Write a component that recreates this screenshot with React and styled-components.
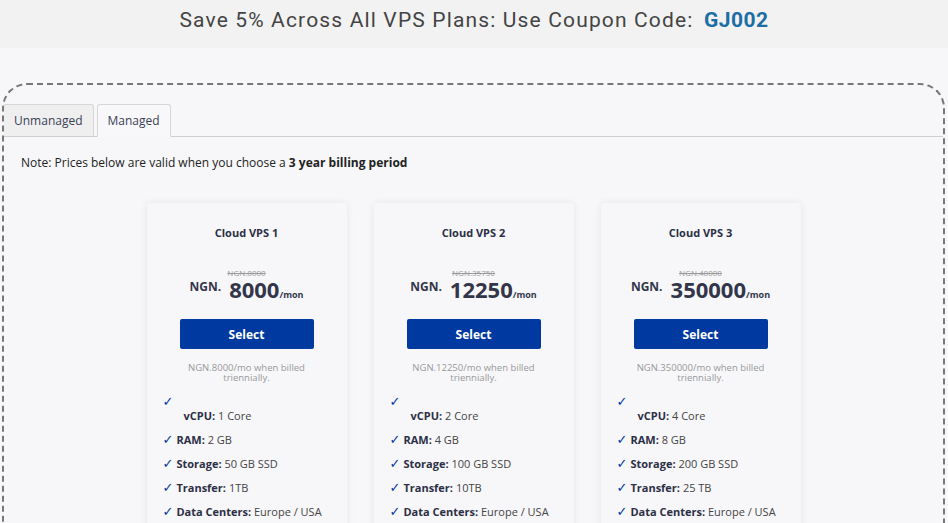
import React from "react";
import styled, { createGlobalStyle } from "styled-components";

const GlobalStyle = createGlobalStyle`
  body {
    margin: 0;
    background: #f7f7f9;
    font-family: "Open Sans", "Liberation Sans", sans-serif;
    color: #2e2e3a;
  }
`;

const plans = [
  {
    name: "Cloud VPS 1",
    old: "NGN.8000",
    price: "8000",
    cpu: "1 Core",
    ram: "2 GB",
    storage: "50 GB SSD",
    transfer: "1TB",
  },
  {
    name: "Cloud VPS 2",
    old: "NGN.35750",
    price: "12250",
    cpu: "2 Core",
    ram: "4 GB",
    storage: "100 GB SSD",
    transfer: "10TB",
  },
  {
    name: "Cloud VPS 3",
    old: "NGN.48000",
    price: "350000",
    cpu: "4 Core",
    ram: "8 GB",
    storage: "200 GB SSD",
    transfer: "25 TB",
  },
];

const App = () => {
  return (
    <>
      <GlobalStyle />
      <Banner>
        Save 5% Across All VPS Plans: Use Coupon Code: <Coupon>GJ002</Coupon>
      </Banner>
      <Panel>
        <TabBar>
          <Tab>Unmanaged</Tab>
          <Tab active>Managed</Tab>
        </TabBar>
        <Note>
          Note: Prices below are valid when you choose a <b>3 year billing period</b>
        </Note>
        <Cards>
          {plans.map((plan) => (
            <Card key={plan.name}>
              <Title>{plan.name}</Title>
              <OldPrice>{plan.old}</OldPrice>
              <PriceRow>
                <Currency>NGN.</Currency>
                <Amount>{plan.price}</Amount>
                <Per>/mon</Per>
              </PriceRow>
              <SelectButton>Select</SelectButton>
              <Billed>
                NGN.{plan.price}/mo when billed
                <br />
                triennially.
              </Billed>
              <Features>
                <Feature stacked>
                  <Check>✓</Check>
                  <span>
                    <b>vCPU:</b> {plan.cpu}
                  </span>
                </Feature>
                <Feature>
                  <Check>✓</Check>
                  <span>
                    <b>RAM:</b> {plan.ram}
                  </span>
                </Feature>
                <Feature>
                  <Check>✓</Check>
                  <span>
                    <b>Storage:</b> {plan.storage}
                  </span>
                </Feature>
                <Feature>
                  <Check>✓</Check>
                  <span>
                    <b>Transfer:</b> {plan.transfer}
                  </span>
                </Feature>
                <Feature>
                  <Check>✓</Check>
                  <span>
                    <b>Data Centers:</b> Europe / USA
                  </span>
                </Feature>
              </Features>
            </Card>
          ))}
        </Cards>
      </Panel>
    </>
  );
};

const Banner = styled("div")({
  height: "48px",
  boxSizing: "border-box",
  paddingTop: "6px",
  background: "#f2f2f2",
  textAlign: "center",
  fontFamily: "Roboto, sans-serif",
  fontSize: "21px",
  letterSpacing: "1.15px",
  color: "#444",
  lineHeight: "28px",
});

const Coupon = styled("span")({
  fontWeight: 700,
  color: "#1c6ea4",
  marginLeft: "4px",
  letterSpacing: "0.5px",
});

const Panel = styled("div")({
  margin: "35px 3px 0 2px",
  border: "2px dashed #777",
  borderBottom: "none",
  borderRadius: "25px 25px 0 0",
  height: "460px",
  overflow: "hidden",
});

const TabBar = styled("div")({
  display: "flex",
  gap: "3px",
  paddingTop: "19px",
  borderBottom: "1px solid #cfcfcf",
});

const Tab = styled("div")(({ active }) => ({
  height: "33px",
  boxSizing: "border-box",
  padding: "0 10px",
  marginBottom: "-1px",
  display: "flex",
  alignItems: "center",
  fontSize: "12px",
  color: "#3a3f55",
  background: active ? "#f8f8fa" : "#efefef",
  border: "1px solid #d6d6d6",
  borderBottomColor: active ? "#f8f8fa" : "#cfcfcf",
  borderRadius: "3px 3px 0 0",
  marginLeft: active ? 0 : "-1px",
}));

const Note = styled("div")({
  padding: "17px 0 0 17px",
  fontSize: "12px",
  color: "#222",
  b: { fontWeight: 700 },
});

const Cards = styled("div")({
  display: "flex",
  justifyContent: "center",
  gap: "27px",
  marginTop: "32px",
});

const Card = styled("div")({
  width: "200px",
  boxSizing: "border-box",
  background: "#f7f7f9",
  borderRadius: "4px",
  boxShadow: "0 0 8px rgba(0,0,0,0.07)",
  padding: "23px 16px 0",
  display: "flex",
  flexDirection: "column",
  alignItems: "center",
  height: "340px",
});

const Title = styled("div")({
  fontSize: "11px",
  fontWeight: 700,
  color: "#2c2f45",
  lineHeight: "14px",
});

const OldPrice = styled("div")({
  marginTop: "28px",
  fontSize: "8px",
  color: "#999",
  textDecoration: "line-through",
  lineHeight: "10px",
});

const PriceRow = styled("div")({
  display: "flex",
  alignItems: "flex-end",
  lineHeight: 1,
  color: "#33364a",
  fontWeight: 700,
  marginTop: "0px",
});

const Currency = styled("span")({
  fontSize: "12px",
  alignSelf: "flex-start",
  marginTop: "3px",
  marginRight: "8px",
});

const Amount = styled("span")({
  fontSize: "22px",
});

const Per = styled("span")({
  fontSize: "9px",
  marginBottom: "1px",
});

const SelectButton = styled("button")({
  marginTop: "19px",
  width: "134px",
  height: "30px",
  border: "none",
  borderRadius: "2px",
  background: "#00399f",
  color: "#fff",
  fontFamily: "inherit",
  fontSize: "12px",
  fontWeight: 700,
});

const Billed = styled("div")({
  marginTop: "14px",
  fontSize: "9.5px",
  lineHeight: "10px",
  color: "#999",
  textAlign: "center",
});

const Features = styled("ul")({
  listStyle: "none",
  margin: "12px 0 0",
  padding: 0,
  alignSelf: "stretch",
  display: "flex",
  flexDirection: "column",
  gap: "10px",
});

const Feature = styled("li")(({ stacked }) => ({
  fontSize: "11px",
  lineHeight: "14px",
  color: "#444",
  display: "flex",
  flexDirection: stacked ? "column" : "row",
  alignItems: stacked ? "flex-start" : "center",
  gap: stacked ? "0px" : "3px",
  span: { paddingLeft: stacked ? "21px" : 0 },
  b: { fontWeight: 700, color: "#2c2f45" },
}));

const Check = styled("span")({
  color: "#00399f",
  fontFamily: "'DejaVu Sans', sans-serif",
  fontSize: "13px",
  fontWeight: 700,
  "&&": { paddingLeft: 0 },
});

export default App;
